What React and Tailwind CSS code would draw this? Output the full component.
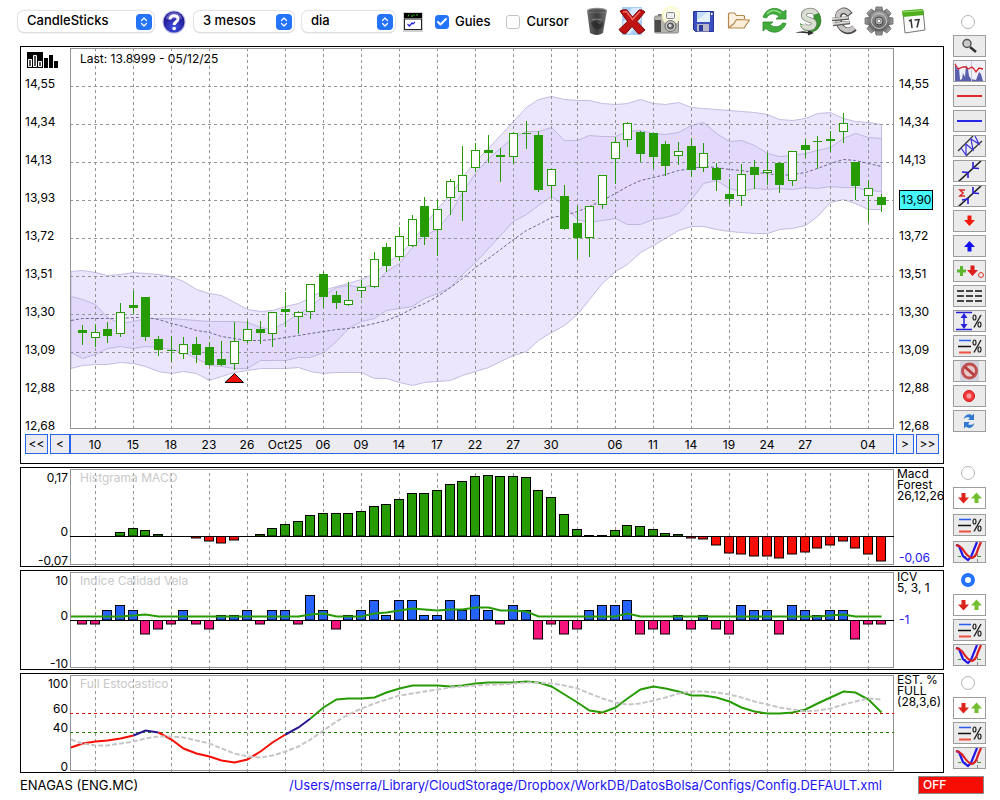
// src/App.jsx
import { ChevronsUpDown, Check } from "lucide-react";

// Plot space shared by every chart: x runs from 70 to 894, one session every 12.68 units
const sessionX = (i) => Math.round(82 + 12.68 * i);

const ticks = [
  [1, "10"], [4, "15"], [7, "18"], [10, "23"], [13, "26"], [16, "Oct25"], [19, "06"], [22, "09"],
  [25, "14"], [28, "17"], [31, "22"], [34, "27"], [37, "30"], [39, ""], [42, "06"], [45, "11"],
  [48, "14"], [51, "19"], [54, "24"], [57, "27"], [59, ""], [62, "04"],
];

const prices = ["14,55", "14,34", "14,13", "13,93", "13,72", "13,51", "13,30", "13,09", "12,88", "12,68"];

// [body top, body bottom, wick top, wick bottom, bearish]
const candles = [
  [330, 333, 325, 345, 1], [332, 338, 324, 347, 0], [329, 336, 322, 343, 1], [312, 334, 303, 337, 0],
  [305, 308, 291, 314, 1], [297, 337, 297, 341, 1], [339, 350, 336, 356, 1], [350, 351, 336, 362, 1],
  [344, 354, 337, 359, 0], [344, 355, 337, 363, 1], [347, 365, 342, 366, 1], [359, 365, 341, 366, 1],
  [341, 364, 322, 370, 0], [329, 341, 321, 343, 0], [329, 333, 321, 344, 1], [312, 334, 312, 347, 0],
  [309, 312, 292, 327, 1], [312, 317, 311, 334, 0], [284, 312, 284, 319, 0], [274, 297, 272, 308, 1],
  [295, 303, 291, 309, 1], [300, 305, 282, 306, 0], [287, 291, 280, 298, 0], [259, 287, 252, 288, 0],
  [247, 266, 243, 272, 1], [236, 257, 227, 261, 0], [219, 246, 215, 247, 0], [206, 237, 197, 245, 1],
  [209, 230, 200, 256, 0], [181, 198, 179, 215, 0], [175, 192, 146, 221, 0], [150, 168, 143, 172, 0],
  [150, 153, 135, 163, 1], [155, 157, 148, 182, 1], [133, 157, 132, 164, 0], [133, 134, 121, 149, 1],
  [135, 190, 131, 192, 1], [169, 186, 169, 198, 0], [196, 229, 185, 230, 1], [223, 238, 206, 259, 1],
  [206, 238, 206, 257, 0], [175, 205, 175, 209, 0], [142, 159, 137, 184, 0], [123, 140, 122, 147, 0],
  [132, 154, 131, 162, 1], [133, 157, 133, 169, 1], [144, 166, 141, 176, 1], [151, 156, 142, 165, 0],
  [146, 170, 138, 177, 1], [153, 168, 143, 172, 0], [168, 180, 163, 191, 1], [194, 199, 179, 204, 1],
  [174, 196, 164, 206, 0], [167, 175, 160, 189, 1], [170, 173, 153, 185, 0], [163, 185, 162, 193, 1],
  [151, 181, 151, 186, 0], [145, 150, 139, 158, 1], [141, 142, 136, 169, 1], [139, 141, 131, 152, 1],
  [123, 132, 113, 143, 0], [162, 186, 162, 200, 1], [188, 196, 180, 222, 0], [197, 205, 194, 212, 1],
];

// Bands: the first value sits on the left edge of the plot, the rest one per session
const outerTop = [271, 270, 272, 275, 274, 272, 273, 274, 276, 281, 289, 293, 295, 302, 309, 311, 310, 306, 303, 297, 290, 286, 283, 279, 273, 263, 254, 241, 225, 208, 195, 177, 161, 148, 135, 121, 107, 99, 96, 99, 100, 100, 103, 104, 103, 99, 103, 104, 102, 107, 108, 109, 110, 111, 112, 114, 119, 120, 118, 113, 112, 118, 121, 122, 124];
const outerBottom = [368, 365, 364, 364, 362, 363, 366, 371, 373, 371, 373, 380, 376, 372, 370, 368, 368, 368, 367, 371, 373, 372, 372, 372, 378, 378, 382, 385, 382, 381, 380, 375, 371, 367, 361, 355, 351, 340, 332, 325, 314, 299, 283, 271, 264, 252, 245, 238, 230, 226, 226, 229, 231, 232, 233, 233, 229, 228, 225, 216, 202, 199, 203, 209, 209];
const innerTop = [296, 299, 304, 317, 323, 321, 318, 318, 318, 319, 320, 321, 321, 321, 322, 327, 329, 322, 313, 307, 295, 287, 285, 287, 284, 271, 263, 247, 235, 229, 213, 192, 173, 158, 148, 137, 131, 131, 127, 140, 140, 135, 136, 136, 131, 130, 133, 134, 132, 125, 122, 133, 141, 140, 145, 153, 156, 155, 153, 150, 147, 138, 133, 137, 138];
const innerBottom = [352, 358, 354, 348, 346, 348, 346, 347, 349, 352, 358, 365, 366, 368, 368, 360, 360, 360, 357, 357, 352, 341, 328, 321, 318, 310, 308, 306, 298, 293, 287, 274, 262, 248, 235, 221, 214, 205, 196, 205, 219, 222, 220, 218, 224, 224, 219, 217, 213, 199, 183, 180, 188, 191, 188, 189, 188, 189, 187, 188, 186, 187, 187, 190, 191];
const average = [320, 318, 318, 318, 318, 317, 317, 319, 323, 326, 330, 332, 336, 338, 340, 340, 339, 337, 335, 333, 331, 329, 328, 326, 323, 320, 315, 308, 303, 296, 287, 278, 267, 258, 249, 239, 230, 224, 217, 215, 211, 206, 200, 193, 186, 180, 177, 174, 170, 168, 166, 167, 169, 170, 172, 173, 175, 174, 172, 168, 163, 159, 160, 163, 166];

// MACD histogram, distance from the zero line
const macd = [0, 0, 0, 4, 8, 6, 2, 0, 0, -2, -5, -7, -4, 0, 2, 8, 12, 15, 21, 23, 23, 23, 25, 30, 32, 37, 43, 43, 46, 52, 55, 60, 61, 60, 60, 59, 46, 39, 22, 7, 1, 1, 6, 11, 10, 7, 3, 2, -2, -3, -9, -17, -18, -20, -20, -22, -18, -16, -12, -9, -5, -12, -18, -25];

const quality = [-1, -1, 2, 3, 2, -3, -2, -1, 2, -1, -2, 1, 1, 2, -1, 2, 2, -1, 5, 2, -2, 1, 2, 4, 1, 4, 4, 1, 1, 4, 2, 5, 2, -1, 3, 2, -4, -1, -3, -2, 2, 3, 3, 4, -3, -2, -3, 1, -2, 1, -2, -3, 3, 2, 2, -3, 3, 2, 1, 2, 2, -4, -1, -1];
const qualityLine = [616, 616, 616, 616, 616, 615, 614, 616, 616, 616, 616, 616, 616, 616, 616, 616, 616, 616, 616, 614, 613, 616, 616, 616, 613, 612, 610, 608, 609, 610, 609, 609, 607, 607, 610, 610, 611, 616, 616, 616, 616, 616, 616, 616, 613, 616, 616, 616, 616, 616, 616, 616, 616, 616, 616, 616, 616, 616, 616, 616, 615, 614, 616, 616, 616];

const stochastic = [747, 743, 741, 740, 738, 735, 730, 732, 739, 748, 753, 756, 760, 762, 759, 751, 742, 734, 727, 718, 707, 699, 698, 698, 697, 692, 688, 685, 685, 685, 686, 685, 683, 682, 682, 682, 681, 682, 686, 694, 702, 710, 712, 707, 698, 689, 686, 688, 691, 695, 695, 697, 701, 707, 711, 713, 713, 712, 709, 703, 697, 691, 692, 699, 712];
const signal = [739, 743, 745, 745, 743, 741, 738, 736, 736, 737, 740, 743, 748, 753, 756, 757, 755, 751, 746, 739, 730, 721, 714, 708, 703, 699, 695, 693, 691, 689, 687, 686, 685, 684, 684, 683, 682, 682, 683, 685, 688, 693, 698, 702, 704, 703, 700, 697, 693, 691, 691, 692, 694, 697, 701, 704, 707, 709, 711, 710, 708, 704, 701, 698, 699];

const toPoints = (values) => values.map((y, i) => [i === 0 ? 71 : sessionX(i - 1) + 0.5, y + 0.5]);
const asLine = (points) => points.map((p) => p.join(",")).join(" ");
const asArea = (top, bottom) => asLine([...toPoints(top), ...toPoints(bottom).reverse()]);

function VerticalGuides({ from, to }) {
  return ticks.map(([i]) => (
    <line key={i} x1={sessionX(i) + 0.5} x2={sessionX(i) + 0.5} y1={from} y2={to} stroke="#949494" strokeDasharray="3 3" />
  ));
}

function PriceChart() {
  return (
    <svg viewBox="70 48 824 384" preserveAspectRatio="none" className="block h-[384px] w-full">
      <polygon points={asArea(outerTop, outerBottom)} fill="#ebe5fd" stroke="#c3bce0" />
      <polygon points={asArea(innerTop, innerBottom)} fill="#e2d9fc" stroke="#c0b8de" />
      {prices.slice(0, 9).map((p, i) => (
        <line key={p} x1="70" x2="894" y1={86.5 + 38 * i} y2={86.5 + 38 * i} stroke="#949494" strokeDasharray="3 3" />
      ))}
      <VerticalGuides from={48} to={430} />
      <polyline points={asLine(toPoints(average))} fill="none" stroke="#6f6690" strokeDasharray="3 2" />
      {candles.map(([top, bottom, high, low, bearish], i) => {
        const x = sessionX(i);
        return (
          <g key={i}>
            <rect x={x} y={high} width="1" height={low - high} fill="#279b04" />
            {bearish ? (
              <rect x={x - 4} y={top} width="9" height={bottom - top} fill="#279b04" />
            ) : (
              <rect x={x - 3.5} y={top + 0.5} width="8" height={bottom - top - 1} fill="#fff" stroke="#279b04" />
            )}
          </g>
        );
      })}
      <path d="M225 382.5 L234.500 373.500 L243.500 382.500 Z" fill="#f80d05" stroke="#000" />
      <rect x="70.500" y="48.500" width="823" height="380" fill="none" stroke="#949494" />
    </svg>
  );
}

function SubPlot({ top, children }) {
  return (
    <svg viewBox={`70 ${top} 824 98`} preserveAspectRatio="none" className="block h-[98px] w-full">
      <rect x="70.500" y={top + 1.5} width="823" height="95" fill="none" stroke="#949494" />
      <VerticalGuides from={top + 5} to={top + 98} />
      {children}
    </svg>
  );
}

function Bar({ i, zero, size, up, down }) {
  if (size === 0) return null;
  const height = Math.abs(size);
  return (
    <rect
      x={sessionX(i) - 4.5}
      y={size > 0 ? zero - height + 0.5 : zero + 0.5}
      width="9"
      height={Math.max(height - 0.5, 0.5)}
      fill={size > 0 ? up : down}
      stroke="#000"
    />
  );
}

function MacdChart() {
  return (
    <SubPlot top={468}>
      {macd.map((v, i) => (
        <Bar key={i} i={i} zero={536} size={v} up="#279b04" down="#f80d05" />
      ))}
      <path d="M70 536.500 H894" stroke="#000" />
    </SubPlot>
  );
}

function QualityChart() {
  return (
    <SubPlot top={571}>
      {quality.map((v, i) => (
        <Bar key={i} i={i} zero={620} size={v > 0 ? v * 5 : v * 5 + 1} up="#2563ff" down="#f5147c" />
      ))}
      <path d="M70 620.500 H894" stroke="#000" />
      <polyline points={asLine(toPoints(qualityLine))} fill="none" stroke="#279b04" strokeWidth="2" />
    </SubPlot>
  );
}

function StochasticChart() {
  const points = toPoints(stochastic);
  const segments = [
    [0, 5, "#f80d05"],
    [5, 7, "#2a1590"],
    [7, 17, "#f80d05"],
    [17, 19, "#2a1590"],
    [19, 64, "#279b04"],
  ];
  return (
    <SubPlot top={674}>
      <path d="M70 713.500 H894" stroke="#d80d05" strokeDasharray="3 3" />
      <path d="M70 732.500 H894" stroke="#1d7d04" strokeDasharray="3 3" />
      {segments.map(([a, b, color]) => (
        <polyline key={a} points={asLine(points.slice(a, b + 1))} fill="none" stroke={color} strokeWidth="2" />
      ))}
      <polyline points={asLine(toPoints(signal))} fill="none" stroke="#c6c6c6" strokeWidth="2" strokeDasharray="5 2" />
    </SubPlot>
  );
}

function Indicator({ title, scale, legend, value, valueClass, children }) {
  return (
    <section className="flex h-[100px] border border-black">
      <div className="relative w-[49px] shrink-0">
        {scale.map(([label, y]) => (
          <span key={label} className="absolute right-[2px] -translate-y-1/2 leading-4" style={{ top: y }}>
            {label}
          </span>
        ))}
      </div>
      <div className="relative min-w-0 flex-1">
        {children}
        <h2 className="absolute top-[2px] left-[10px] leading-4 text-[#c8c8c8]">{title}</h2>
      </div>
      <div className="relative w-[49px] shrink-0 pl-[3px] leading-[11px] whitespace-nowrap">
        {legend.map((l) => (
          <p key={l}>{l}</p>
        ))}
        {value && <p className={`absolute left-[5px] text-[#1c14f5] ${valueClass}`}>{value}</p>}
      </div>
    </section>
  );
}

function Picker({ label, value, options, className }) {
  return (
    <div className={`relative h-[21px] shrink-0 ${className}`}>
      <select
        aria-label={label}
        defaultValue={value}
        className="h-full w-full appearance-none rounded-md bg-white pb-px pl-[9px] text-[13px] font-medium shadow-[0_0_1px_1px_#e2e2e2,0_1px_1px_#b8b8b8]"
      >
        {options.map((o) => (
          <option key={o}>{o}</option>
        ))}
      </select>
      <span className="pointer-events-none absolute top-[3px] right-[2px] flex h-4 w-4 items-center justify-center rounded bg-[#2473fb]">
        <ChevronsUpDown className="h-3 w-3 text-white" strokeWidth={2.5} />
      </span>
    </div>
  );
}

function Tick({ label, checked }) {
  return (
    <label className="flex items-center gap-[6px] text-[13px] font-medium">
      <span className="relative flex h-[14px] w-[14px]">
        <input
          type="checkbox"
          defaultChecked={checked}
          className="peer h-[14px] w-[14px] appearance-none rounded-[3px] border border-[#c4c4c4] bg-white checked:border-[#2473fb] checked:bg-[#2473fb]"
        />
        <Check className="pointer-events-none absolute inset-px hidden h-3 w-3 text-white peer-checked:block" strokeWidth={4} />
      </span>
      {label}
    </label>
  );
}

/* ---------- toolbar icons ---------- */

const HelpIcon = () => (
  <svg viewBox="0 0 24 24" className="h-6 w-6">
    <defs>
      <radialGradient id="help" cx="0.5" cy="0.75" r="0.7">
        <stop offset="0" stopColor="#3f55e8" />
        <stop offset="0.6" stopColor="#2a26a8" />
        <stop offset="1" stopColor="#1c1686" />
      </radialGradient>
    </defs>
    <circle cx="12" cy="12" r="11.500" fill="#b9b8e8" />
    <circle cx="12" cy="12" r="10.500" fill="url(#help)" />
    <path d="M4 9 C5 0 19 0 20 9 C15 7 9 10 4 9 Z" fill="#8f8de0" opacity="0.6" />
    <path d="M8 9.500 C8 4.300 16.300 4.500 16 9.200 C15.700 11.800 12.200 11.800 12.200 15" fill="none" stroke="#fff" strokeWidth="3" />
    <circle cx="12.200" cy="18.500" r="1.800" fill="#fff" />
  </svg>
);

const PlotIcon = () => (
  <svg viewBox="0 0 20 20" className="h-5 w-5">
    <rect width="20" height="20" fill="#d0d0d0" />
    <rect x="1" y="1" width="18" height="5" fill="#000" />
    <path d="M5 4.500 L6 2.500 M8 4 H10 M11 2.500 V4 M13 3 H15" stroke="#2fc41e" />
    <rect x="1.500" y="7" width="17" height="10.500" fill="#fff" stroke="#222" />
    <path d="M4.500 12 L6.500 14 L9 11 L10 12 L12 10" fill="none" stroke="#2722e0" strokeWidth="1.200" />
  </svg>
);

const TrashIcon = () => (
  <svg viewBox="0 0 28 30" className="h-[30px] w-7">
    <defs>
      <linearGradient id="bin">
        <stop offset="0" stopColor="#6d6d6d" />
        <stop offset="0.5" stopColor="#3c3c3c" />
        <stop offset="1" stopColor="#777" />
      </linearGradient>
    </defs>
    <path d="M4 4 L7 27 Q14 31 20 27 L24 4 Z" fill="url(#bin)" />
    <ellipse cx="14" cy="4.500" rx="10" ry="2.800" fill="#8b8b8b" />
    <ellipse cx="14" cy="4.900" rx="8.500" ry="2" fill="#555" />
    <path d="M8 17 Q12 13 14 17 Q18 20 20 15 Q21 22 16 23 Q10 24 8 17" fill="#1f1f1f" opacity="0.6" />
    <path d="M9 14 Q14 12 19 14" fill="none" stroke="#8a8a8a" />
  </svg>
);

const DeleteIcon = () => (
  <svg viewBox="0 0 28 30" className="h-[30px] w-7">
    <rect x="4" y="1" width="20" height="28" fill="#a9cdf5" />
    <path d="M5 16 L14 2 H23 V14 L12 28 H5 Z" fill="#d7e8fc" />
    <path d="M2 5 Q5 3 9 4 L14.500 11 L21 4 Q24 3 27 6 L19 15.500 L27 24 Q24 27 20.500 28 L14 20.500 L7.500 28 Q4 28 1 23.500 L9.500 15.500 Z" fill="#bf1212" stroke="#7c0808" strokeWidth="1" strokeLinejoin="round" />
    <path d="M5 6 L8.500 5.500 L14.500 13.500 L22 5.500" fill="none" stroke="#ec6a62" strokeWidth="1.500" />
  </svg>
);

const CameraIcon = () => (
  <svg viewBox="0 0 28 30" className="h-[30px] w-7">
    <rect x="5" y="8" width="5" height="3" fill="#777" />
    <rect x="1.500" y="10" width="24" height="17" rx="1.500" fill="#b4b4ac" stroke="#888" />
    <rect x="2" y="14" width="6" height="12" fill="#4b4b4b" />
    <circle cx="18" cy="9.500" r="9.500" fill="#fbf8c9" opacity="0.9" />
    <circle cx="18" cy="9.500" r="7.500" fill="#fffef0" opacity="0.8" />
    <rect x="13.500" y="6.500" width="8" height="6" rx="1" fill="#eee" stroke="#888" />
    <circle cx="17.500" cy="20" r="5.500" fill="#c9c9c9" stroke="#666" />
    <circle cx="17.500" cy="20" r="3" fill="#777" stroke="#444" />
    <circle cx="17" cy="19.500" r="1.500" fill="#ddd" />
  </svg>
);

const SaveIcon = () => (
  <svg viewBox="0 0 28 30" className="h-[30px] w-7">
    <path d="M4.500 5.500 H24.500 V25.500 H6.500 L4.500 23.500 Z" fill="#3b4fc0" stroke="#26349a" />
    <rect x="8" y="6" width="13" height="10" fill="#c3ddf9" />
    <path d="M8 14 L19 6 H21 V16 H8 Z" fill="#e3f0fd" />
    <rect x="8" y="18" width="12" height="7.500" fill="#b9b9c8" />
    <rect x="10" y="19" width="4" height="6" fill="#2b3b9e" />
    <rect x="22" y="7" width="1.500" height="2" fill="#fff" />
  </svg>
);

const FolderIcon = () => (
  <svg viewBox="0 0 28 30" className="h-[30px] w-7">
    <path d="M4.500 21.500 V8 Q4.500 7 5.500 7 H10.500 L12.500 9.500 H19.500 Q20.500 9.500 20.500 10.500 V13" fill="#fdf1df" stroke="#b5854c" strokeWidth="1.200" />
    <path d="M4.500 22 L10 17.500 L12.500 13.500 L25.500 14 L20 22 Z" fill="#fdeed8" stroke="#b5854c" strokeWidth="1.200" strokeLinejoin="round" />
  </svg>
);

const RefreshIcon = () => (
  <svg viewBox="0 0 28 30" className="h-[30px] w-7">
    <path d="M4 11 C8 0 20 1 24 6 L27 4 V13 H17 L20 10.500 C16 6.500 10 7 7.500 12 Z" fill="#41ab3c" stroke="#2c8a2a" strokeWidth="0.800" />
    <path d="M27 17.500 C23 28 12 28 7 22.500 L4 25 V16 H14 L11 18.500 C15 22 21 21.500 23.500 17 Z" fill="#41ab3c" stroke="#2c8a2a" strokeWidth="0.800" />
    <path d="M8 8 C12 3 18 4 22 7.500" fill="none" stroke="#8ddb83" strokeWidth="1.500" />
  </svg>
);

const DollarIcon = () => (
  <svg viewBox="0 0 28 30" className="h-[30px] w-7">
    <path d="M19 3 Q27 6 27 15 Q26 26 14 26.500 Q22 20 20 12 Z" fill="#3b9433" stroke="#236b1e" strokeWidth="0.600" />
    <path d="M6 17 Q7 24 13 25 L11 20 Z" fill="#3b9433" />
    <path d="M1 27 Q8 24 14 26 L13 23.500 L20 27 L14 29.500 V27.500 Q8 26.500 1 27" fill="#2f2f2f" />
    <path d="M22 8 C20 3 9 4 10 10 C11 15 21 13 20 18 C19 23 11 23 9 18.500" fill="none" stroke="#7d8078" strokeWidth="6" />
    <path d="M22 8 C20 3 9 4 10 10 C11 15 21 13 20 18 C19 23 11 23 9 18.500" fill="none" stroke="#d9ddd2" strokeWidth="4.500" />
  </svg>
);

const EuroIcon = () => (
  <svg viewBox="0 0 28 30" className="h-[30px] w-7">
    <path d="M20 9 C14 1 7 6 8.500 14 C10 24 18 28 24.500 22" fill="none" stroke="#4d4a4a" strokeWidth="6.500" />
    <path d="M19.500 8 C13 1 6.500 6 8 14 C10 24 18 27 24 21.500" fill="none" stroke="#c9c5c5" strokeWidth="4.500" />
    <path d="M2 13.500 L19 12 M3 18.500 L20 16.500" stroke="#5b5757" strokeWidth="3.500" />
    <path d="M2 13 L18.500 11.500 M3 18 L19.500 16" stroke="#d8d3d3" strokeWidth="2" />
  </svg>
);

const GearIcon = () => (
  <svg viewBox="0 0 30 30" className="h-[30px] w-[30px] shrink-0">
    <defs>
      <linearGradient id="gear" x2="0" y2="1">
        <stop offset="0" stopColor="#a3a3a3" />
        <stop offset="1" stopColor="#5c5c5c" />
      </linearGradient>
    </defs>
    {[0, 45, 90, 135, 180, 225, 270, 315].map((a) => (
      <path key={a} d="M11 7 L12 1 H18 L19 7 Z" fill="url(#gear)" stroke="#555" strokeWidth="0.700" transform={`rotate(${a} 15 15)`} />
    ))}
    <circle cx="15" cy="15" r="10" fill="url(#gear)" />
    <circle cx="15" cy="15" r="7.500" fill="none" stroke="#c9c9c9" />
    <circle cx="15" cy="15" r="4" fill="#b5b5b5" stroke="#444" />
    <circle cx="15" cy="15" r="1.800" fill="#fff" stroke="#555" strokeWidth="0.600" />
  </svg>
);

const CalendarIcon = () => (
  <svg viewBox="0 0 28 30" className="h-[30px] w-7">
    <path d="M3 6 L23 4 L25 24 L5 27 Z" fill="#fbfbfb" stroke="#777" />
    <path d="M2 6 Q2 4.500 3.500 4.500 L21 3 Q23 3 23.300 4.500 L24 9 L3 11 Z" fill="#4faf1f" />
    <path d="M3 6 L22.500 4.500" stroke="#9be06f" />
    <path d="M9 15 L11 14 L12 22 M14.500 14 L19 13.500 L17 21.500" fill="none" stroke="#333" strokeWidth="1.500" />
  </svg>
);

const tools = [
  ["Trash", TrashIcon], ["Delete", DeleteIcon], ["Snapshot", CameraIcon], ["Save", SaveIcon], ["Open", FolderIcon],
  ["Refresh", RefreshIcon], ["Dollar", DollarIcon], ["Euro", EuroIcon], ["Settings", GearIcon], ["Calendar", CalendarIcon],
];

/* ---------- side bar icons, 31 x 20 ---------- */

const percent = (
  <g fill="none" stroke="#222" strokeWidth="1.200">
    <path d="M27 4 L20 16.500" strokeWidth="1.400" />
    <ellipse cx="20.500" cy="6.500" rx="1.500" ry="2.500" />
    <ellipse cx="25.500" cy="13.500" rx="1.500" ry="2.500" />
  </g>
);

const arrowUp = "M0 -5.500 L5.500 0.500 H2 V5 H-2 V0.500 H-5.500 Z";
const arrowDown = "M0 5.500 L5.500 -0.500 H2 V-5 H-2 V-0.500 H-5.500 Z";

const side = {
  zoom: (
    <>
      <path d="M16 11 L22 16" stroke="#333" strokeWidth="2.500" />
      <circle cx="13" cy="7.500" r="4" fill="#c9c9c9" stroke="#555" strokeWidth="1.500" />
    </>
  ),
  volume: (
    <>
      <rect width="31" height="20" fill="#f1f1fa" />
      <path d="M1 20 V2 L2 4 L3 9 L5 6 L6 19 L8 18 L9 12 L11 16 L12 4 L14 8 L15 15 L17 18 L22 19 L25 11 L27 13 L29 20 Z" fill="#5a5fae" />
      <path d="M17.500 0 V20" stroke="#c8c8e0" />
      <path d="M1 3 L4 8 L9 6 L12 6 L14 8 L18 6 L20 8 L22 11 L25 7 L29 8" fill="none" stroke="#d62323" strokeWidth="1.300" />
    </>
  ),
  red: <path d="M3 10 H28" stroke="#e0282a" strokeWidth="2" />,
  blue: <path d="M3 10 H28" stroke="#2626e8" strokeWidth="2" />,
  channel: (
    <>
      <path d="M4 15 L19 0 M12 20 L28 5" stroke="#333" strokeWidth="1.300" />
      <path d="M7 12 L12 19 V8 L19 14 L17 3 L25 8 L21 0" fill="none" stroke="#3a2fe0" strokeWidth="1.200" />
    </>
  ),
  trend: (
    <>
      <path d="M4 21 L27 0" stroke="#222" strokeWidth="1.600" />
      <path d="M8 11 L14 11.500 V17 M19 1 V7 L25 7.500" fill="none" stroke="#2a20d8" strokeWidth="1.600" />
    </>
  ),
  sumTrend: (
    <>
      <path d="M4 21 L27 0" stroke="#222" strokeWidth="1.600" />
      <path d="M8 14 L14 13 V18 M19 1 V7 L25 7.500" fill="none" stroke="#2a20d8" strokeWidth="1.600" />
      <path d="M11 4 H6 L9 7 L6 10 H11" fill="none" stroke="#d8282a" strokeWidth="1.600" />
    </>
  ),
  down: <path d={arrowDown} transform="translate(15.500 9.500)" fill="#f51a0c" />,
  up: <path d={arrowUp} transform="translate(15.500 10.500)" fill="#1212f0" />,
  signals: (
    <>
      <path d="M7.500 5 V15 M3 10 H12" stroke="#5ab52c" strokeWidth="3" />
      <path d={arrowDown} transform="translate(18.500 9.500)" fill="#dc1f1c" />
      <circle cx="27" cy="14" r="2.500" fill="none" stroke="#e03a30" />
    </>
  ),
  dashes: <path d="M3 5 H28 M3 10 H28 M3 15 H28" stroke="#444" strokeWidth="2" strokeDasharray="7 2" />,
  range: (
    <>
      <path d="M2 1.500 H18 M2 18.500 H18" stroke="#2a20d8" strokeWidth="1.500" />
      <path d="M10 3 V17" stroke="#2a20d8" strokeWidth="1.500" />
      <path d="M10 2 L13.500 7 H6.500 Z M10 18 L13.500 13 H6.500 Z" fill="#2a20d8" />
      {percent}
    </>
  ),
  lines: (
    <>
      <path d="M5 4.500 H17" stroke="#2b5cf0" strokeWidth="1.500" />
      <path d="M4 10.500 H17" stroke="#111" strokeWidth="1.500" />
      <path d="M5 16.500 H17" stroke="#ee5340" strokeWidth="2" />
      {percent}
    </>
  ),
  forbid: (
    <>
      <rect x="6" width="19" height="20" fill="#d3d3df" />
      <circle cx="15.500" cy="10" r="7" fill="#e8c9c9" stroke="#c05050" strokeWidth="3" />
      <path d="M11 6 L20 14" stroke="#b23b3b" strokeWidth="3" />
    </>
  ),
  record: (
    <>
      <circle cx="15" cy="10" r="5.500" fill="#f23a3a" stroke="#d31414" />
      <circle cx="15" cy="10" r="2.500" fill="#fb9b9b" />
    </>
  ),
  sync: (
    <>
      <path d="M9.500 8 C11 3 16 2 18 4.500 L20 2.500 V9 H14 L16 7 C14 5.500 12 6 9.500 8" fill="#2f7ad0" />
      <path d="M20.500 12 C19 17.500 14 18 12 15.500 L10 17.500 V11 H16 L14 13 C16 14.500 18 14 20.500 12" fill="#2f7ad0" />
    </>
  ),
  downUp: (
    <>
      <rect width="31" height="20" fill="#fff" />
      <path d={arrowDown} transform="translate(9.500 10)" fill="#dc241c" />
      <path d={arrowUp} transform="translate(22.500 10)" fill="#74bf30" />
    </>
  ),
  curves: (
    <>
      <path d="M4 14.500 H29" stroke="#3f9a2c" strokeDasharray="3 2" />
      <path d="M23.500 20 V12" stroke="#888" strokeDasharray="3 2" />
      <path d="M2 3 L5 4 L9 14 L14 18 L17 15 L23 0" fill="none" stroke="#2418e8" strokeWidth="2.200" />
      <path d="M2 3 Q7 4 10 9 Q14 15 18 16 Q22 15 24 7 L27 0" fill="none" stroke="#dc2020" strokeWidth="2.200" />
    </>
  ),
};

function SideButton({ name }) {
  return (
    <button aria-label={name} className="h-[22px] w-[33px] border border-[#9d9d9d] bg-[#ebebeb]">
      <svg viewBox="0 0 31 20" className="block h-5 w-[31px]">
        {side[name]}
      </svg>
    </button>
  );
}

function PanelRadio({ label, checked }) {
  return (
    <input
      type="radio"
      name="panel"
      aria-label={label}
      defaultChecked={checked}
      className="ml-2 h-[14px] w-[14px] shrink-0 appearance-none rounded-full border border-[#b4b4b4] bg-white checked:border-[4px] checked:border-[#2473fb]"
    />
  );
}

const drawTools = [
  "zoom", "volume", "red", "blue", "channel", "trend", "sumTrend", "down",
  "up", "signals", "dashes", "range", "lines", "forbid", "record", "sync",
];
const panelTools = ["downUp", "lines", "curves"];

const navButton = "h-5 border border-[#2563eb] bg-[#ebebf0] leading-[18px]";

export default function App() {
  return (
    <div className="min-h-screen bg-white font-['Inter','Liberation_Sans',sans-serif] text-[12px] text-black">
      <div className="flex">
        <main className="min-w-0 flex-1">
          <header className="flex h-[46px] items-start gap-2 pt-[6px] pl-[18px] pr-4">
            <div className="flex h-[31px] items-center gap-2">
              <Picker label="Tipus" value="CandleSticks" options={["CandleSticks", "Linies", "Barres"]} className="w-[136px]" />
              <button aria-label="Ajuda">
                <HelpIcon />
              </button>
              <Picker label="Periode" value="3 mesos" options={["3 mesos", "6 mesos", "1 any"]} className="w-[100px]" />
              <Picker label="Interval" value="dia" options={["dia", "setmana", "mes"]} className="w-[93px]" />
              <button aria-label="Finestra">
                <PlotIcon />
              </button>
              <div className="ml-1 flex gap-4">
                <Tick label="Guies" checked />
                <Tick label="Cursor" />
              </div>
            </div>
            <div className="ml-auto flex w-[345px] justify-between">
              {tools.map(([label, Icon]) => (
                <button key={label} aria-label={label} className="flex w-7 justify-center">
                  <Icon />
                </button>
              ))}
            </div>
          </header>

          <div className="flex flex-col gap-[3px] pl-5">
            <section className="border border-black pt-px pb-[9px]">
              <div className="flex">
                <div className="flex w-[49px] shrink-0 flex-col pt-1 pl-1">
                  <svg viewBox="0 0 32 16" className="ml-[2px] mb-2 h-4 w-8">
                    <rect width="16" height="16" fill="#000" />
                    <path d="M1.500 7.500 H4.500 V14.500 H1.500 Z M6.500 3.500 H9.500 V14.500 H6.500 Z M11.500 9.500 H14.500 V14.500 H11.500 Z" fill="#555" stroke="#fff" />
                    <path d="M17 6 H21 V16 H17 Z M22 3 H26 V16 H22 Z M27 9 H31 V16 H27 Z" fill="#000" />
                  </svg>
                  <div className="flex flex-col gap-[22px]">
                    {prices.map((p) => (
                      <span key={p} className="h-4 leading-4">
                        {p}
                      </span>
                    ))}
                  </div>
                </div>
                <div className="relative min-w-0 flex-1">
                  <PriceChart />
                  <p className="absolute top-[3px] left-[10px] leading-4">Last: 13.8999 - 05/12/25</p>
                </div>
                <div className="flex w-[49px] shrink-0 flex-col items-start gap-[22px] pt-7 pl-[5px]">
                  {prices.map((p, i) =>
                    i === 3 ? (
                      <span key={p} className="-mb-1 h-5 border border-black bg-[#45f8fd] px-px leading-[18px]">
                        13,90
                      </span>
                    ) : (
                      <span key={p} className="h-4 leading-4">
                        {p}
                      </span>
                    )
                  )}
                </div>
              </div>

              <nav className="flex">
                <div className="flex w-[49px] shrink-0 gap-[2px] pl-1">
                  <button className={`${navButton} w-[23px]`}>&lt;&lt;</button>
                  <button className={`${navButton} w-5`}>&lt;</button>
                </div>
                <div className={`${navButton} relative min-w-0 flex-1`}>
                  {ticks.map(([i, label]) => (
                    <span
                      key={i}
                      className="absolute top-px -translate-x-1/2"
                      style={{ left: `${((sessionX(i) - 71) / 822) * 100}%` }}
                    >
                      {label}
                    </span>
                  ))}
                </div>
                <div className="flex w-[49px] shrink-0 gap-[2px] pl-[2px]">
                  <button className={`${navButton} w-[18px]`}>&gt;</button>
                  <button className={`${navButton} w-[23px]`}>&gt;&gt;</button>
                </div>
              </nav>
            </section>

            <Indicator
              title="Histgrama MACD"
              scale={[["0,17", 10], ["0", 64], ["-0,07", 93]]}
              legend={["Macd", "Forest", "26,12,26"]}
              value="-0,06"
              valueClass="bottom-[3px]"
            >
              <MacdChart />
            </Indicator>
            <Indicator
              title="Indice Calidad Vela"
              scale={[["10", 10], ["0", 45], ["-10", 93]]}
              legend={["ICV", "5, 3, 1"]}
              value="-1"
              valueClass="top-[43px]"
            >
              <QualityChart />
            </Indicator>
            <Indicator
              title="Full Estocastico"
              scale={[["100", 10], ["60", 35], ["40", 54], ["0", 93]]}
              legend={["EST. %", "FULL", "(28,3,6)"]}
            >
              <StochasticChart />
            </Indicator>
          </div>
        </main>

        <aside className="flex w-14 shrink-0 flex-col pl-[9px]">
          <div className="flex h-[466px] flex-col gap-[3px] pt-[15px]">
            <PanelRadio label="Preu" />
            <div className="flex flex-col gap-[3px] pt-[3px]">
              {drawTools.map((t) => (
                <SideButton key={t} name={t} />
              ))}
            </div>
          </div>
          <div className="flex h-[104px] flex-col gap-[5px]">
            <PanelRadio label="MACD" />
            <div className="flex flex-col gap-[5px] pt-[2px]">
              {panelTools.map((t) => (
                <SideButton key={t} name={t} />
              ))}
            </div>
          </div>
          {["Qualitat", "Estocastic"].map((label, i) => (
            <div key={label} className="flex h-[103px] flex-col gap-[3px] pt-[3px]">
              <PanelRadio label={label} checked={i === 0} />
              <div className="flex flex-col gap-[3px] pt-1">
                {panelTools.map((t) => (
                  <SideButton key={t} name={t} />
                ))}
              </div>
            </div>
          ))}
        </aside>
      </div>

      <footer className="flex items-center pr-4 pl-5 text-[13px] leading-[18px]">
        <span>ENAGAS (ENG.MC)</span>
        <a href="#config" className="mr-9 ml-auto text-[#1c14f5]">
          /Users/mserra/Library/CloudStorage/Dropbox/WorkDB/DatosBolsa/Configs/Config.DEFAULT.xml
        </a>
        <button className="h-[18px] w-[66px] border border-[#8a8a8a] bg-[#f80d05] pl-1 text-left text-[12px] leading-4 font-medium text-white">
          OFF
        </button>
      </footer>
    </div>
  );
}
